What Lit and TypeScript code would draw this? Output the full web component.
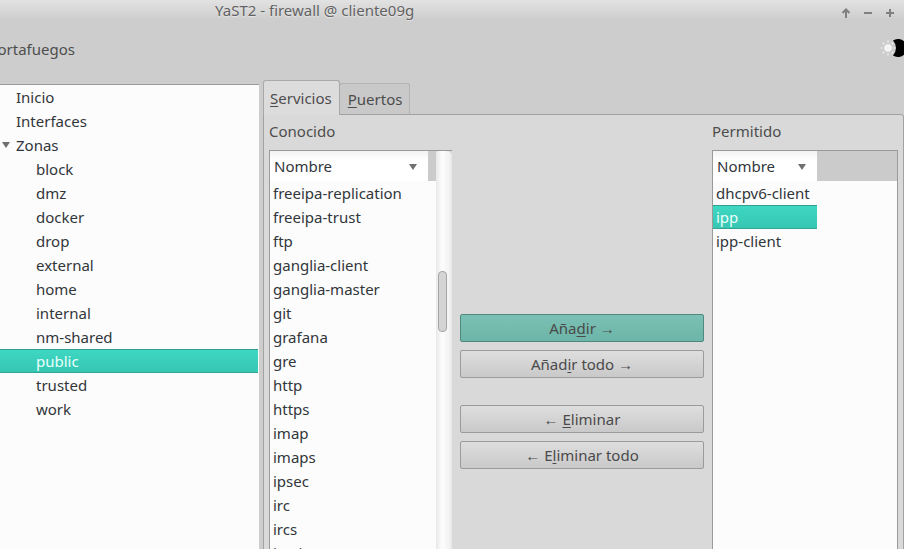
import { LitElement, html, css } from 'lit'
import { customElement } from 'lit/decorators.js'

const KNOWN = [
  'freeipa-replication', 'freeipa-trust', 'ftp', 'ganglia-client', 'ganglia-master', 'git',
  'grafana', 'gre', 'http', 'https', 'imap', 'imaps', 'ipsec', 'irc', 'ircs', 'iscsi-target',
]
const ZONES = ['block', 'dmz', 'docker', 'drop', 'external', 'home', 'internal', 'nm-shared', 'public', 'trusted', 'work']
const ALLOWED = ['dhcpv6-client', 'ipp', 'ipp-client']

@customElement('app-root')
export class AppRoot extends LitElement {
  static styles = css`
    :host {
      display: block;
      width: 904px;
      height: 549px;
      overflow: hidden;
      background: #cdcdcd;
      color: #31363b;
      font-family: 'Noto Sans', sans-serif;
      font-size: 15px;
      line-height: 24px;
    }
    .titlebar {
      height: 20px;
      display: flex;
      justify-content: space-between;
      background: linear-gradient(#e2e2e2, #cdcdcd);
      color: #626262;
      line-height: 20px;
      padding-left: 215px;
      text-shadow: 0 1px 1px rgba(255, 255, 255, 0.5);
    }
    .winbtns { padding: 3px 8px 0 0; }
    .heading {
      height: 64px;
      display: flex;
      justify-content: space-between;
      margin: 0 -3px 0 -12px;
      padding-top: 17px;
      box-sizing: border-box;
      color: #4d4d4d;
    }
    .heading svg { margin-top: 2px; }
    .main { display: flex; height: 465px; }
    .tree {
      width: 259px;
      flex: none;
      box-sizing: border-box;
      background: #fcfcfc;
      border-top: 1px solid #9a9a9a;
    }
    .row { height: 24px; white-space: nowrap; }
    .tree .row { padding-left: 16px; margin-right: 1px; position: relative; }
    .tree .child { padding-left: 36px; }
    .tree svg { position: absolute; left: 2px; top: 9px; }
    .sel {
      background: linear-gradient(#3ed8c3, #36c6b2);
      box-shadow: inset 0 1px 0 #2f9f90, inset 0 -1px 0 #33a596;
      color: #eafffb;
    }
    .side { flex: 1; padding-left: 4px; margin-top: -4px; min-width: 0; }
    .tabs { display: flex; height: 34px; align-items: flex-end; }
    .tab {
      box-sizing: border-box;
      border: 1px solid #b4b4b4;
      border-bottom: 0;
      border-radius: 3px 3px 0 0;
      color: #4d4d4d;
    }
    .tab.on {
      height: 35px;
      margin-bottom: -1px;
      position: relative;
      background: #dcdcdc;
      border-color: #a8a8a8;
      line-height: 34px;
      padding: 0 7px 0 6px;
    }
    .tab.off {
      height: 31px;
      line-height: 31px;
      background: #c9c9c9;
      margin-left: -1px;
      padding: 0 7px 0 8px;
    }
    u { text-underline-offset: 2px; text-decoration-thickness: 1px; }
    .pane {
      height: 440px;
      box-sizing: border-box;
      background: #d9d9d9;
      border: 1px solid #a2a2a2;
      border-radius: 0 3px 0 0;
      padding: 4px 5px 0 5px;
      display: grid;
      grid-template-columns: 183px 260px 186px;
      justify-content: space-between;
    }
    .label { height: 31px; color: #4d4d4d; }
    .table {
      height: 420px;
      box-sizing: border-box;
      border: 1px solid #9a9a9a;
      border-bottom: 0;
      background: #fcfcfc;
      overflow: hidden;
    }
    .known {
      display: grid;
      grid-template-columns: 166px 17px;
      border-right: 0;
      background: transparent;
    }
    .known .col { background: #fcfcfc; }
    .head {
      display: flex;
      height: 30px;
      background: #cbcbcb;
    }
    .hcell {
      box-sizing: border-box;
      height: 30px;
      background: linear-gradient(#f2f2f2, #fff 30%);
      display: flex;
      justify-content: space-between;
      align-items: center;
      padding: 0 11px 0 4px;
    }
    .hcell svg { margin-top: 1px; }
    .known .hcell { width: 158px; }
    .allowed .hcell { width: 104px; }
    .list .row { padding-left: 3px; }
    .allowed .row { width: 101px; }
    .bar {
      background: linear-gradient(90deg, #e8e8e8, #fdfdfd 35%, #f2f2f2 80%, #e0e0e0);
      border-radius: 3px 7px 0 0;
      padding: 120px 0 0 2px;
      box-sizing: border-box;
    }
    .thumb {
      width: 9px;
      height: 61px;
      box-sizing: border-box;
      border: 1px solid #a5a5a5;
      border-radius: 4px;
      background: #d4d4d4;
    }
    .actions {
      display: flex;
      flex-direction: column;
      gap: 8px;
      padding: 195px 8px 0 8px;
    }
    .spacer { height: 11px; }
    .btn {
      height: 28px;
      box-sizing: border-box;
      border: 1px solid #9b9b9b;
      border-radius: 2px;
      background: linear-gradient(#dedede, #c9c9c9);
      text-align: center;
      line-height: 27px;
      color: #4a4a4a;
    }
    .btn.primary {
      background: linear-gradient(#7cc0b4, #6cb5a8);
      border-color: #4f8a80;
    }
  `

  private arrow() {
    return html`<svg width="8" height="6" viewBox="0 0 8 6"><path d="M0 0h8L4 6z" fill="#707070" /></svg>`
  }

  private windowButtons() {
    return html`<svg width="58" height="12" viewBox="0 0 58 12" fill="none" stroke="#808080" stroke-width="2">
      <path d="M8 11V3M4.500 6L8 2.500L11.500 6" />
      <path d="M26 6h8" />
      <path d="M48 6h8M52 2v8" />
    </svg>`
  }

  private theme() {
    return html`<svg width="28" height="18" viewBox="0 0 28 18">
      <circle cx="9" cy="9" r="3.800" fill="#f5f5f5" />
      <path d="M9 1.500v2M9 14.500v2M1.500 9h2M14.500 9h2M3.700 3.700l1.400 1.400M12.900 12.900l1.400 1.400M3.700 14.300l1.400-1.400M12.900 5.100l1.400-1.400"
        stroke="#f5f5f5" stroke-width="1.200" />
      <path d="M14 1.500A9 9 0 1 1 14 16.500A11 11 0 0 0 14 1.500z" fill="#000" />
    </svg>`
  }

  render() {
    return html`
      <div class="titlebar">
        <span>YaST2 - firewall @ cliente09g</span>
        <div class="winbtns">${this.windowButtons()}</div>
      </div>
      <div class="heading">
        <span>Cortafuegos</span>
        ${this.theme()}
      </div>
      <div class="main">
        <div class="tree">
          <div class="row">Inicio</div>
          <div class="row">Interfaces</div>
          <div class="row">${this.arrow()}Zonas</div>
          ${ZONES.map(z => html`<div class="row child ${z === 'public' ? 'sel' : ''}">${z}</div>`)}
        </div>
        <div class="side">
          <div class="tabs">
            <div class="tab on"><u>S</u>ervicios</div>
            <div class="tab off"><u>P</u>uertos</div>
          </div>
          <div class="pane">
            <div>
              <div class="label">Conocido</div>
              <div class="table known">
                <div class="col">
                  <div class="head">
                    <div class="hcell">Nombre ${this.arrow()}</div>
                  </div>
                  <div class="list">${KNOWN.map(k => html`<div class="row">${k}</div>`)}</div>
                </div>
                <div class="bar"><div class="thumb"></div></div>
              </div>
            </div>
            <div class="actions">
              <div class="btn primary">Aña<u>d</u>ir →</div>
              <div class="btn">Añad<u>i</u>r todo →</div>
              <div class="spacer"></div>
              <div class="btn">← <u>E</u>liminar</div>
              <div class="btn">← E<u>l</u>iminar todo</div>
            </div>
            <div>
              <div class="label">Permitido</div>
              <div class="table allowed">
                <div class="head">
                  <div class="hcell">Nombre ${this.arrow()}</div>
                </div>
                <div class="list">
                  ${ALLOWED.map(a => html`<div class="row ${a === 'ipp' ? 'sel' : ''}">${a}</div>`)}
                </div>
              </div>
            </div>
          </div>
        </div>
      </div>
    `
  }
}
